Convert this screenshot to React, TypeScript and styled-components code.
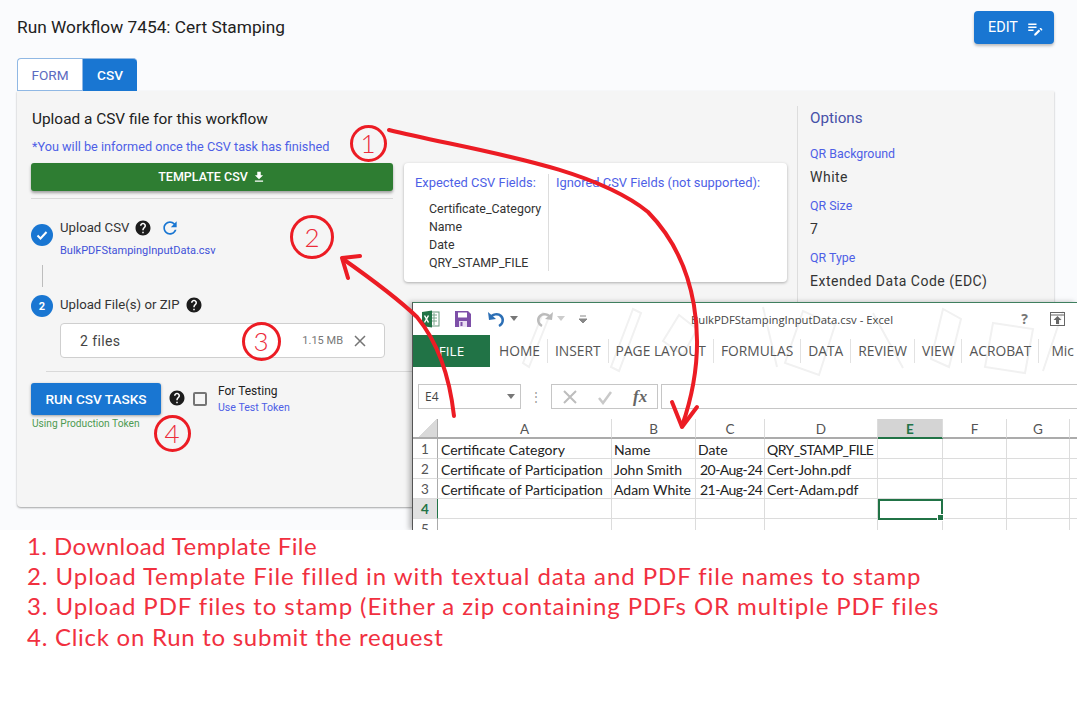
import React from 'react';
import styled, { createGlobalStyle } from 'styled-components';

const GlobalStyle = createGlobalStyle`
  html, body {
    margin: 0;
    padding: 0;
    background: #fff;
    font-family: Roboto, "Liberation Sans", sans-serif;
  }
  * { box-sizing: border-box; }
`;

const Screen = styled.div`
  position: relative;
  width: 1077px;
  height: 530px;
  overflow: hidden;
  background: #fafbfd;
  padding: 11px 23px 0 17px;
`;

const TopBar = styled.div`
  display: flex;
  justify-content: space-between;
  align-items: flex-start;
  height: 47px;
`;

const PageTitle = styled.div`
  font-size: 17.3px;
  line-height: 33px;
  color: #212121;
`;

const EditButton = styled.div`
  display: flex;
  align-items: center;
  justify-content: center;
  gap: 8px;
  width: 80px;
  height: 33px;
  padding-left: 4px;
  background: #1976d2;
  color: #fff;
  border-radius: 4px;
  font-size: 14.4px;
  font-weight: 400;
  box-shadow: 0 2px 3px rgba(0, 0, 0, 0.25);
`;

const Tabs = styled.div`
  display: flex;
  height: 33px;
`;

const Tab = styled.div<{ $active?: boolean }>`
  display: flex;
  align-items: center;
  justify-content: center;
  width: ${p => (p.$active ? 55 : 65)}px;
  font-size: 13.6px;
  font-weight: ${p => (p.$active ? 500 : 400)};
  background: ${p => (p.$active ? '#1976d2' : '#fff')};
  color: ${p => (p.$active ? '#fff' : '#5c6bc0')};
  border: 1px solid #90b8e4;
  border-bottom: ${p => (p.$active ? 'none' : '1px solid #90b8e4')};
  border-right: none;
  border-radius: ${p => (p.$active ? '0 4px 0 0' : '4px 0 0 0')};
`;

const Card = styled.div`
  display: grid;
  grid-template-columns: 362px 383px 1fr;
  column-gap: 11px;
  height: 416px;
  padding: 16px 0 0 14px;
  background: #f5f5f5;
  border-radius: 0 0 4px 4px;
  box-shadow: 0 1px 2px rgba(0, 0, 0, 0.35);
`;

const LeftColumn = styled.div`
  display: flex;
  flex-direction: column;
`;

const UploadTitle = styled.div`
  padding-left: 1px;
  font-size: 15.4px;
  line-height: 24px;
  color: #212121;
`;

const InfoNote = styled.div`
  margin-top: 8px;
  padding-left: 1px;
  font-size: 12.7px;
  line-height: 16px;
  color: #4e5fe6;
`;

const TemplateButton = styled.div`
  display: flex;
  align-items: center;
  justify-content: center;
  gap: 4px;
  height: 28px;
  margin-top: 8px;
  padding-bottom: 1px;
  background: #2e7d32;
  color: #fff;
  font-size: 12.5px;
  font-weight: 500;
  border-radius: 3px;
  box-shadow: 0 2px 3px rgba(0, 0, 0, 0.35);
`;

const Divider = styled.div<{ $wide?: boolean }>`
  height: 1px;
  background: #d9d9d9;
  margin: ${p => (p.$wide ? '13px -20px 0 15px' : '7px 0 0')};
`;

const StepRow = styled.div<{ $top: number }>`
  display: flex;
  gap: 7px;
  margin-top: ${p => p.$top}px;
`;

const StepBadge = styled.div<{ $offset: number }>`
  display: flex;
  align-items: center;
  justify-content: center;
  flex: none;
  width: 22px;
  height: 22px;
  margin-top: ${p => p.$offset}px;
  border-radius: 50%;
  background: #1976d2;
  color: #fff;
  font-size: 11px;
  font-weight: 700;
`;

const StepLabel = styled.div`
  display: flex;
  align-items: center;
  gap: 5px;
  font-size: 13.2px;
  line-height: 20px;
  color: #333;
`;

const StepBody = styled.div`
  display: flex;
  flex-direction: column;
`;

const FileLink = styled.div`
  margin-top: 6px;
  font-size: 11px;
  line-height: 14px;
  color: #3f51d8;
`;

const Connector = styled.div`
  width: 1px;
  height: 22px;
  margin: 7px 0 0 11px;
  background: #bdbdbd;
`;

const FileBox = styled.div`
  display: flex;
  align-items: center;
  height: 35px;
  margin: 6px 8px 0 29px;
  padding: 0 17px 0 19px;
  background: #fff;
  border: 1px solid #cfcfcf;
  border-radius: 4px;
  font-size: 14px;
  letter-spacing: 0.4px;
  color: #444;
`;

const FileSize = styled.span`
  margin-left: auto;
  margin-right: 10px;
  font-size: 11px;
  letter-spacing: 0;
  color: #777;
`;

const RunRow = styled.div`
  display: flex;
  align-items: flex-start;
  margin-top: 11px;
`;

const RunColumn = styled.div`
  display: flex;
  flex-direction: column;
`;

const RunButton = styled.div`
  display: flex;
  align-items: center;
  justify-content: center;
  width: 130px;
  height: 32px;
  padding-bottom: 1px;
  background: #1976d2;
  color: #fff;
  font-size: 13.6px;
  font-weight: 500;
  border-radius: 3px;
  box-shadow: 0 1px 3px rgba(0, 0, 0, 0.35);
`;

const TokenNote = styled.div`
  margin-top: 3px;
  font-size: 10.2px;
  line-height: 12px;
  color: #4d9a52;
  padding-left: 1px;
`;

const RunHelp = styled.div`
  margin: 6px 7px 0 7px;
  display: flex;
`;

const CheckBox = styled.div`
  width: 14px;
  height: 14px;
  margin: 9px 11px 0 0;
  border: 2px solid #757575;
  border-radius: 2px;
`;

const TestColumn = styled.div`
  display: flex;
  flex-direction: column;
  font-size: 12px;
  line-height: 16px;
  color: #222;
`;

const TestLink = styled.div`
  margin-top: 1px;
  font-size: 10.6px;
  line-height: 16px;
  color: #4e5fe6;
`;

const FieldsPanel = styled.div`
  display: grid;
  grid-template-columns: 133px 1fr;
  height: 119px;
  margin-top: 56px;
  padding: 11px 0 0 11px;
  background: #fff;
  border-radius: 4px;
  box-shadow: 0 1px 3px rgba(0, 0, 0, 0.3);
`;

const FieldColumn = styled.div<{ $rule?: boolean }>`
  height: 97px;
  padding-left: ${p => (p.$rule ? 7 : 0)}px;
  border-left: ${p => (p.$rule ? '1px solid #ddd' : 'none')};
`;

const FieldHeading = styled.div`
  font-size: 12.9px;
  line-height: 18px;
  color: #4e5fe6;
  white-space: nowrap;
`;

const FieldList = styled.div`
  margin-top: 8px;
  padding-left: 14px;
  font-size: 12.4px;
  line-height: 18px;
  color: #333;
  white-space: nowrap;
`;

const OptionsColumn = styled.div`
  align-self: start;
  margin: -1px 0 0 -1px;
  height: 230px;
  padding-left: 12px;
  border-left: 1px solid #ddd;
`;

const OptionsTitle = styled.div`
  margin-bottom: 15px;
  font-size: 15.2px;
  line-height: 24px;
  color: #4650a8;
`;

const OptionLabel = styled.div`
  margin-top: 10px;
  font-size: 12.4px;
  line-height: 18px;
  color: #4e5fe6;
`;

const OptionValue = styled.div`
  margin-top: 4px;
  font-size: 14px;
  line-height: 20px;
  letter-spacing: 0.5px;
  color: #333;
`;

const ExcelWindow = styled.div`
  position: absolute;
  left: 412px;
  top: 302px;
  width: 665px;
  height: 228px;
  background: #fff;
  border-top: 1px solid #3f7f5f;
  border-left: 1px solid #555;
  box-shadow: -3px 0 5px rgba(0, 0, 0, 0.25);
  overflow: hidden;
`;

const Watermark = styled.svg`
  position: absolute;
  left: 60px;
  top: 0;
`;

const TitleRow = styled.div`
  position: relative;
  display: flex;
  align-items: center;
  height: 32px;
  padding-left: 9px;
`;

const QuickIcons = styled.div`
  display: flex;
  align-items: center;
`;

const WindowTitle = styled.div`
  position: absolute;
  left: 278px;
  top: 9px;
  font-family: "Open Sans", sans-serif;
  font-size: 11.3px;
  line-height: 16px;
  color: #444;
`;

const WindowButtons = styled.div`
  position: absolute;
  right: 12px;
  top: 6px;
  display: flex;
  align-items: center;
  gap: 22px;
  color: #777;
  font-family: "Open Sans", sans-serif;
  font-weight: 700;
  font-size: 14px;
`;

const RibbonRow = styled.div`
  position: relative;
  display: flex;
  align-items: center;
  height: 32px;
`;

const FileTab = styled.div`
  display: flex;
  align-items: center;
  justify-content: center;
  flex: none;
  width: 77px;
  height: 32px;
  margin-right: 2px;
  background: #217346;
  color: #fff;
  font-family: "Open Sans", sans-serif;
  font-size: 13.5px;
`;

const RibbonTab = styled.div`
  display: flex;
  align-items: center;
  height: 24px;
  padding: 0 7px 2px;
  border-right: 1px solid #e2e2e2;
  font-family: "Open Sans", sans-serif;
  font-size: 13.8px;
  color: #555;
  white-space: nowrap;
  &:last-child { border-right: none; padding-left: 12px; }
`;

const FormulaRow = styled.div`
  position: relative;
  display: flex;
  align-items: center;
  height: 25px;
  margin-top: 17px;
  padding-left: 5px;
`;

const NameBox = styled.div`
  display: flex;
  align-items: center;
  justify-content: space-between;
  width: 103px;
  height: 25px;
  padding: 0 5px 0 6px;
  border: 1px solid #c6c6c6;
  font-family: "Open Sans", sans-serif;
  font-size: 12px;
  color: #444;
`;

const Dots = styled.div`
  width: 30px;
  text-align: center;
  color: #999;
  font-size: 12px;
  line-height: 12px;
`;

const FormulaButtons = styled.div`
  display: flex;
  align-items: center;
  justify-content: space-around;
  width: 107px;
  height: 25px;
  border: 1px solid #c6c6c6;
`;

const FxLabel = styled.span`
  font-family: "Liberation Serif", serif;
  font-style: italic;
  font-weight: 700;
  font-size: 17px;
  color: #666;
`;

const FormulaInput = styled.div`
  flex: 1;
  height: 25px;
  margin-left: 3px;
  border: 1px solid #c6c6c6;
  border-right: none;
`;

const Sheet = styled.div`
  position: relative;
  display: grid;
  grid-template-columns: 25px 174px 84px 69px 113px 65px 64px 63px 10px;
  grid-auto-rows: 20px;
  margin-top: 10px;
  font-family: Lato, Carlito, sans-serif;
  font-size: 14px;
  color: #222;
`;

const HeaderCell = styled.div<{ $selected?: boolean }>`
  display: flex;
  align-items: center;
  justify-content: center;
  height: 20px;
  padding-top: 1px;
  background: ${p => (p.$selected ? '#d4d4d4' : '#fff')};
  color: ${p => (p.$selected ? '#217346' : '#555')};
  font-weight: ${p => (p.$selected ? 700 : 400)};
  font-size: 13.5px;
  border-right: 1px solid #dcdcdc;
  border-bottom: 2px solid ${p => (p.$selected ? '#217346' : '#ababab')};
`;

const Corner = styled.div`
  height: 20px;
  border-right: 1px solid #ababab;
  border-bottom: 2px solid #ababab;
  background: linear-gradient(135deg, transparent 55%, #d9d9d9 55%);
`;

const RowHead = styled.div<{ $selected?: boolean }>`
  display: flex;
  align-items: center;
  justify-content: center;
  padding-top: 1px;
  background: ${p => (p.$selected ? '#e1e1e1' : '#fff')};
  color: ${p => (p.$selected ? '#217346' : '#555')};
  font-weight: ${p => (p.$selected ? 700 : 400)};
  font-size: 13.5px;
  border-bottom: 1px solid #dcdcdc;
  border-right: 1px solid ${p => (p.$selected ? '#217346' : '#ababab')};
`;

const Cell = styled.div<{ $inset?: number; $tight?: boolean }>`
  padding-left: ${p => p.$inset ?? 3}px;
  line-height: 21px;
  letter-spacing: ${p => (p.$tight ? -0.55 : 0)}px;
  border-right: 1px solid #dcdcdc;
  border-bottom: 1px solid #dcdcdc;
  white-space: nowrap;
`;

const ActiveCell = styled.div`
  border: 2px solid #217346;
  position: relative;
  height: 21px;
  &::after {
    content: '';
    position: absolute;
    right: -3px;
    bottom: -3px;
    width: 5px;
    height: 5px;
    background: #217346;
    border: 1px solid #fff;
  }
`;

const Annotations = styled.svg`
  position: absolute;
  left: 0;
  top: 0;
  pointer-events: none;
`;

const Marker = styled.div<{ $x: number; $y: number; $size: number }>`
  position: absolute;
  left: ${p => p.$x - p.$size / 2}px;
  top: ${p => p.$y - p.$size / 2}px;
  width: ${p => p.$size}px;
  height: ${p => p.$size}px;
  display: flex;
  align-items: center;
  justify-content: center;
  border: 3.5px solid #ec1c24;
  border-radius: 50%;
  color: #ec2b3a;
  font-family: Lato, sans-serif;
  font-weight: 300;
  font-size: 26px;
`;

const Notes = styled.div`
  display: flex;
  flex-direction: column;
  height: 174px;
  padding: 1px 0 0 27px;
  background: #fff;
`;

const NoteLine = styled.div<{ $spacing: number }>`
  font-family: Lato, sans-serif;
  font-size: 24px;
  line-height: 30.2px;
  letter-spacing: ${p => p.$spacing}px;
  color: #f1303f;
  white-space: nowrap;
`;

const HELP =
  'M12 2C6.48 2 2 6.48 2 12s4.48 10 10 10 10-4.48 10-10S17.52 2 12 2zm1 17h-2v-2h2v2zm2.07-7.75l-.9.92C13.45 12.9 13 13.5 13 15h-2v-.5c0-1.1.45-2.1 1.17-2.83l1.24-1.26c.37-.36.59-.86.59-1.41 0-1.1-.9-2-2-2s-2 .9-2 2H8c0-2.21 1.79-4 4-4s4 1.79 4 4c0 .88-.36 1.68-.93 2.25z';

const HelpIcon = () => (
  <svg width="18" height="18" viewBox="0 0 24 24">
    <circle cx="12" cy="12" r="7" fill="#fff" />
    <path d={HELP} fill="#1c1c1c" />
  </svg>
);

const RefreshIcon = () => (
  <svg width="20" height="20" viewBox="0 0 24 24" style={{ marginLeft: 3 }}>
    <path
      fill="#1976d2"
      d="M17.65 6.35C16.2 4.9 14.21 4 12 4c-4.42 0-7.99 3.58-7.99 8s3.57 8 7.99 8c3.73 0 6.84-2.55 7.73-6h-2.08c-.82 2.33-3.04 4-5.65 4-3.31 0-6-2.69-6-6s2.69-6 6-6c1.66 0 3.14.69 4.22 1.78L13 11h7V4l-2.35 2.35z"
    />
  </svg>
);

const DownloadIcon = () => (
  <svg width="14" height="14" viewBox="0 0 24 24">
    <path fill="#fff" d="M19 9h-4V3H9v6H5l7 7 7-7zM5 18v2h14v-2H5z" />
  </svg>
);

const EditNoteIcon = () => (
  <svg width="18" height="18" viewBox="0 0 24 24">
    <path
      fill="#fff"
      d="M3 10h11v2H3v-2zm0-2h11V6H3v2zm0 8h7v-2H3v2zm15.01-3.13l.71-.71c.39-.39 1.02-.39 1.41 0l1.42 1.42c.39.39.39 1.02 0 1.41l-.71.71-2.83-2.83zm-1.06 1.06L11 19.88V22h2.12l5.96-5.94-2.13-2.13z"
    />
  </svg>
);

const CloseIcon = () => (
  <svg width="14" height="14" viewBox="0 0 14 14">
    <path d="M2 2l10 10M12 2L2 12" stroke="#757575" strokeWidth="1.5" fill="none" />
  </svg>
);

const ExcelIcons = () => (
  <QuickIcons>
    <svg width="18" height="18" viewBox="0 0 18 18">
      <rect x="7" y="2" width="10" height="14" fill="#fff" stroke="#6a9a7e" />
      <path d="M9 5h6M9 8h6M9 11h6M12 3v12" stroke="#7aa68c" strokeWidth="1" />
      <path d="M0 2l10-1.500v17L0 16z" fill="#217346" />
      <path d="M2.500 5.500l4 7M6.500 5.500l-4 7" stroke="#fff" strokeWidth="1.500" />
    </svg>
    <svg width="18" height="18" viewBox="0 0 18 18" style={{ marginLeft: 14 }}>
      <path d="M1 1h13l3 3v13H1z" fill="#7d4fa8" />
      <rect x="4" y="2.500" width="9" height="5" fill="#fff" />
      <rect x="5" y="11" width="8" height="6" fill="#e9def2" />
      <rect x="6.500" y="12" width="2" height="4" fill="#7d4fa8" />
    </svg>
    <svg width="20" height="18" viewBox="0 0 20 18" style={{ marginLeft: 15 }}>
      <path d="M3 8c2-4 8-5 11-2 3 3 2 8-2 10" stroke="#2c6fb5" strokeWidth="2.500" fill="none" />
      <path d="M1 2l1 8 7-1z" fill="#2c6fb5" />
    </svg>
    <svg width="8" height="6" viewBox="0 0 8 6" style={{ marginLeft: 3 }}>
      <path d="M0 0h8L4 5z" fill="#777" />
    </svg>
    <svg width="20" height="18" viewBox="0 0 20 18" style={{ marginLeft: 16 }}>
      <path d="M17 8c-2-4-8-5-11-2-3 3-2 8 2 10" stroke="#bbb" strokeWidth="2.500" fill="none" />
      <path d="M19 2l-1 8-7-1z" fill="#bbb" />
    </svg>
    <svg width="8" height="6" viewBox="0 0 8 6" style={{ marginLeft: 3 }}>
      <path d="M0 0h8L4 5z" fill="#ccc" />
    </svg>
    <svg width="8" height="9" viewBox="0 0 8 9" style={{ marginLeft: 14 }}>
      <path d="M1 1h6M0 4h8L4 8z" stroke="#888" fill="#888" strokeWidth="1" />
    </svg>
  </QuickIcons>
);

const ribbonTabs = ['HOME', 'INSERT', 'PAGE LAYOUT', 'FORMULAS', 'DATA', 'REVIEW', 'VIEW', 'ACROBAT', 'Mic'];
const columns = ['A', 'B', 'C', 'D', 'E', 'F', 'G'];
const rows = [
  ['Certificate Category', 'Name', 'Date', 'QRY_STAMP_FILE'],
  ['Certificate of Participation', 'John Smith', '20-Aug-24', 'Cert-John.pdf'],
  ['Certificate of Participation', 'Adam White', '21-Aug-24', 'Cert-Adam.pdf'],
];

const ExcelSheet = () => (
  <Sheet>
    <Corner />
    {columns.map(c => (
      <HeaderCell key={c} $selected={c === 'E'}>{c}</HeaderCell>
    ))}
    <HeaderCell />
    {rows.map((row, r) => (
      <React.Fragment key={r}>
        <RowHead>{r + 1}</RowHead>
        {row.map((value, c) => (
          <Cell
            key={c}
            $inset={r > 0 && c === 2 ? 4 : c === 0 ? 3 : 2}
            $tight={(r > 0 && c === 2) || (r === 0 && c === 3)}
          >
            {value}
          </Cell>
        ))}
        <Cell /><Cell /><Cell /><Cell />
      </React.Fragment>
    ))}
    <RowHead $selected>4</RowHead>
    <Cell /><Cell /><Cell /><Cell />
    <ActiveCell />
    <Cell /><Cell /><Cell />
    <RowHead>5</RowHead>
    <Cell /><Cell /><Cell /><Cell /><Cell /><Cell /><Cell /><Cell />
  </Sheet>
);

const ExcelPane = () => (
  <ExcelWindow>
    <Watermark width="600" height="85" viewBox="0 0 600 85">
      <g stroke="#f1f1f1" strokeWidth="2" fill="none">
        <path d="M160 6l-22 58 8 4 22-58zM206 12l18 14-14 26-20-14zM290 4l14 60M330 8l-18 52 34 12 16-50zM470 6l-12 50 18 8 12-48zM520 20l40 6-8 44-40-6z" />
        <path d="M70 10l-20 50 6 4 20-50zM400 10l30 55M590 8l-20 60" />
      </g>
    </Watermark>
    <TitleRow>
      <ExcelIcons />
      <WindowTitle>BulkPDFStampingInputData.csv - Excel</WindowTitle>
      <WindowButtons>
        <span>?</span>
        <svg width="15" height="14" viewBox="0 0 15 14">
          <rect x="0.500" y="0.500" width="14" height="13" fill="none" stroke="#666" />
          <path d="M1 3h13" stroke="#666" />
          <path d="M7.500 4l-4 4h2.500v4h3V8H11.500z" fill="#666" />
        </svg>
      </WindowButtons>
    </TitleRow>
    <RibbonRow>
      <FileTab>FILE</FileTab>
      {ribbonTabs.map(t => (
        <RibbonTab key={t}>{t}</RibbonTab>
      ))}
    </RibbonRow>
    <FormulaRow>
      <NameBox>
        E4
        <svg width="8" height="5" viewBox="0 0 8 5">
          <path d="M0 0h8L4 5z" fill="#777" />
        </svg>
      </NameBox>
      <Dots>⋮</Dots>
      <FormulaButtons>
        <svg width="16" height="16" viewBox="0 0 16 16">
          <path d="M2 2l12 12M14 2L2 14" stroke="#bdbdbd" strokeWidth="2" />
        </svg>
        <svg width="16" height="16" viewBox="0 0 16 16">
          <path d="M2 9l4 5 8-11" stroke="#c9c9c9" strokeWidth="2.500" fill="none" />
        </svg>
        <FxLabel>fx</FxLabel>
      </FormulaButtons>
      <FormulaInput />
    </FormulaRow>
    <ExcelSheet />
  </ExcelWindow>
);

const App = () => (
  <>
    <GlobalStyle />
    <Screen>
      <TopBar>
        <PageTitle>Run Workflow 7454: Cert Stamping</PageTitle>
        <EditButton>EDIT <EditNoteIcon /></EditButton>
      </TopBar>
      <Tabs>
        <Tab>FORM</Tab>
        <Tab $active>CSV</Tab>
      </Tabs>
      <Card>
        <LeftColumn>
          <UploadTitle>Upload a CSV file for this workflow</UploadTitle>
          <InfoNote>*You will be informed once the CSV task has finished</InfoNote>
          <TemplateButton>TEMPLATE CSV <DownloadIcon /></TemplateButton>
          <Divider />
          <StepRow $top={19}>
            <StepBadge $offset={6}>
              <svg width="14" height="14" viewBox="0 0 14 14">
                <path d="M2.500 7.500l3 3 6-6.500" stroke="#fff" strokeWidth="2" fill="none" />
              </svg>
            </StepBadge>
            <StepBody>
              <StepLabel>Upload CSV <HelpIcon /><RefreshIcon /></StepLabel>
              <FileLink>BulkPDFStampingInputData.csv</FileLink>
            </StepBody>
          </StepRow>
          <Connector />
          <StepRow $top={5}>
            <StepBadge $offset={3}>2</StepBadge>
            <StepLabel>Upload File(s) or ZIP <HelpIcon /></StepLabel>
          </StepRow>
          <FileBox>
            2 files
            <FileSize>1.15 MB</FileSize>
            <CloseIcon />
          </FileBox>
          <Divider $wide />
          <RunRow>
            <RunColumn>
              <RunButton>RUN CSV TASKS</RunButton>
              <TokenNote>Using Production Token</TokenNote>
            </RunColumn>
            <RunHelp><HelpIcon /></RunHelp>
            <CheckBox />
            <TestColumn>
              For Testing
              <TestLink>Use Test Token</TestLink>
            </TestColumn>
          </RunRow>
        </LeftColumn>
        <FieldsPanel>
          <FieldColumn>
            <FieldHeading>Expected CSV Fields:</FieldHeading>
            <FieldList>
              <div>Certificate_Category</div>
              <div>Name</div>
              <div>Date</div>
              <div>QRY_STAMP_FILE</div>
            </FieldList>
          </FieldColumn>
          <FieldColumn $rule>
            <FieldHeading>Ignored CSV Fields (not supported):</FieldHeading>
          </FieldColumn>
        </FieldsPanel>
        <OptionsColumn>
          <OptionsTitle>Options</OptionsTitle>
          <OptionLabel>QR Background</OptionLabel>
          <OptionValue>White</OptionValue>
          <OptionLabel>QR Size</OptionLabel>
          <OptionValue>7</OptionValue>
          <OptionLabel>QR Type</OptionLabel>
          <OptionValue>Extended Data Code (EDC)</OptionValue>
        </OptionsColumn>
      </Card>
      <ExcelPane />
      <Annotations width="1077" height="530" viewBox="0 0 1077 530">
        <g stroke="#ec1c24" strokeWidth="4" fill="none" strokeLinecap="round" strokeLinejoin="round">
          <path d="M389 130C470 150 590 165 648 212C695 260 712 340 682 426" />
          <path d="M672 402L682 427L697 407" />
          <path d="M454 416C450 380 440 345 417 317C395 296 370 278 343 259" />
          <path d="M348 278L342 258L360 256" />
        </g>
      </Annotations>
      <Marker $x={368} $y={143} $size={37}>1</Marker>
      <Marker $x={312} $y={237} $size={44}>2</Marker>
      <Marker $x={261} $y={341} $size={39}>3</Marker>
      <Marker $x={172} $y={433} $size={37}>4</Marker>
    </Screen>
    <Notes>
      <NoteLine $spacing={0.44}>1. Download Template File</NoteLine>
      <NoteLine $spacing={0.94}>2. Upload Template File filled in with textual data and PDF file names to stamp</NoteLine>
      <NoteLine $spacing={0.91}>3. Upload PDF files to stamp (Either a zip containing PDFs OR multiple PDF files</NoteLine>
      <NoteLine $spacing={0.73}>4. Click on Run to submit the request</NoteLine>
    </Notes>
  </>
);

export default App;
